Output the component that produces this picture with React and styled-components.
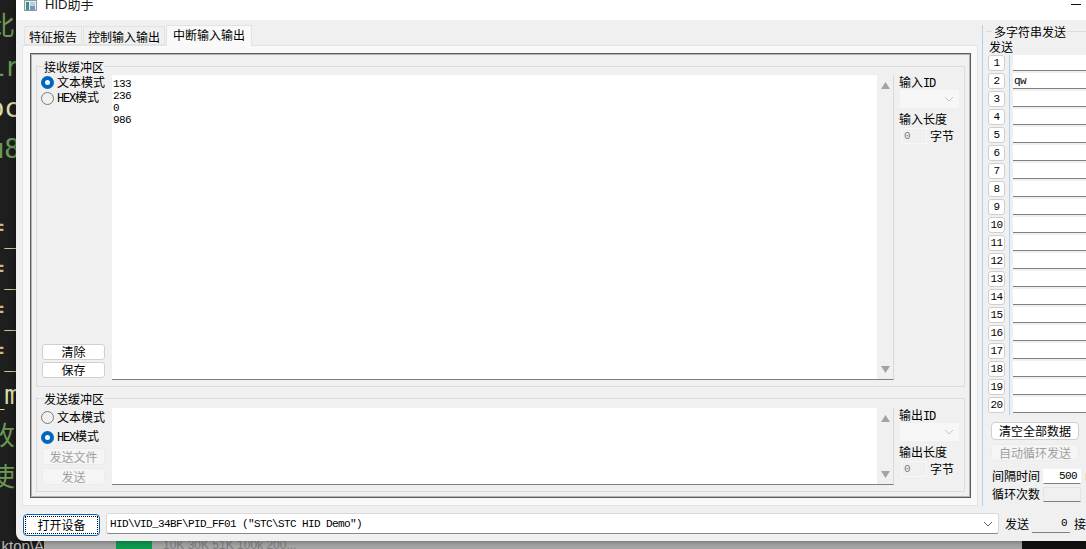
import React from "react";
import styled, { createGlobalStyle } from "styled-components";

const CJK = `"Noto Sans CJK SC", "Liberation Sans", sans-serif`;
const MONO = `"Liberation Mono", "Noto Sans CJK SC", monospace`;

const CODE_LINES = [
  { text: "比", color: "#6a9955", inset: 5 },
  { text: "Lr", color: "#6a9955", inset: 0 },
  { text: "oc", color: "#dcdcaa", inset: 0 },
  { text: "u8", color: "#6a9955", inset: 0 },
  { text: " ", color: "#d4d4d4", inset: 0 },
  { rule: true },
  { rule: true },
  { rule: true },
  { rule: true },
  { text: "_m", color: "#dcdcaa", inset: 0 },
  { text: "收", color: "#6a9955", inset: 5 },
  { text: "使", color: "#6a9955", inset: 5 },
];

const SLOTS = Array.from({ length: 20 }, (_, i) => i + 1);

const Triangle = ({ down }) => (
  <svg width="9" height="7" viewBox="0 0 9 7" style={{ display: "block" }}>
    <path d={down ? "M0 0H9L4.5 7Z" : "M0 7H9L4.5 0Z"} fill="#a3a3a3" />
  </svg>
);

const Chevron = ({ color = "#606060" }) => (
  <svg width="10" height="6" viewBox="0 0 10 6" style={{ display: "block" }}>
    <path d="M1 1L5 5L9 1" fill="none" stroke={color} strokeWidth="1" />
  </svg>
);

const AppIcon = () => (
  <svg width="13" height="20" viewBox="0 0 13 20" style={{ display: "block" }}>
    <rect x="0.5" y="0.5" width="12" height="10" fill="#e8eef0" stroke="#8a9aa0" />
    <rect x="2" y="2" width="3" height="8" fill="#3f8f8a" />
    <rect x="6" y="2" width="5" height="4" fill="#b8cfe0" />
    <rect x="6" y="6" width="5" height="4" fill="#7d93c4" />
  </svg>
);

const Buffer = ({ legend, layout, modeText, modeHex, lines, bottom, idLabel, lenLabel }) => (
  <Group $height={layout.height}>
    <Legend>{legend}</Legend>
    <BufferRow $height={layout.row}>
      <ModeColumn $top={layout.radioTop} $bottom={layout.stackBottom}>
        <RadioRow $on={modeText}>
          <Radio $on={modeText} />
          <span>文本模式</span>
        </RadioRow>
        <RadioRow $gap={layout.radioGap} $on={modeHex}>
          <Radio $on={modeHex} />
          <span>
            <Latin>HEX</Latin>模式
          </span>
        </RadioRow>
        <ButtonStack $gap={layout.stackGap}>{bottom}</ButtonStack>
      </ModeColumn>
      <TextPane $top={layout.paneTop}>
        <TextBody>{lines}</TextBody>
        <ScrollTrack>
          <Triangle />
          <Triangle down />
        </ScrollTrack>
      </TextPane>
      <SettingsColumn $top={layout.settingsTop}>
        <SettingLabel>
          {idLabel}
          <Latin>ID</Latin>
        </SettingLabel>
        <DisabledCombo>
          <Chevron color="#c4c4c4" />
        </DisabledCombo>
        <SettingLabel>{lenLabel}</SettingLabel>
        <LengthRow>
          <LengthInput>0</LengthInput>
          <span>字节</span>
        </LengthRow>
      </SettingsColumn>
    </BufferRow>
  </Group>
);

const RECEIVE_LAYOUT = {
  height: 329,
  row: 312,
  radioTop: 0,
  radioGap: 0,
  paneTop: 1,
  settingsTop: 0,
  stackBottom: 8,
  stackGap: 2,
};

const SEND_LAYOUT = {
  height: 102,
  row: 85,
  radioTop: 3,
  radioGap: 4,
  paneTop: 2,
  settingsTop: 1,
  stackBottom: 6,
  stackGap: 3,
};

export default function App() {
  return (
    <Desktop>
      <GlobalStyle />
      <CodeStrip>
        {CODE_LINES.map((line, i) =>
          line.rule ? (
            <CodeLine key={i}>
              <CodeEquals>=</CodeEquals>
              <CodeUnder>_</CodeUnder>
            </CodeLine>
          ) : (
            <CodeLine key={i} $color={line.color} $inset={line.inset}>
              {line.text}
            </CodeLine>
          )
        )}
      </CodeStrip>
      <Taskbar>
        <TaskPath>ktop\A</TaskPath>
        <TaskMeter />
        <TaskLabel>10K 30K 51K 100k 200...</TaskLabel>
        <TaskDark />
      </Taskbar>
      <Window>
        <TitleBar>
          <AppIcon />
          <TitleText>HID助手</TitleText>
          <Minimize />
        </TitleBar>
        <MainRow>
          <TabsArea>
            <TabBar>
              <Tab>特征报告</Tab>
              <Tab>控制输入输出</Tab>
              <Tab $active>中断输入输出</Tab>
            </TabBar>
            <TabPanel>
              <Frame>
                <Buffer
                  legend="接收缓冲区"
                  layout={RECEIVE_LAYOUT}
                  modeText
                  lines={"133\n236\n0\n986"}
                  idLabel="输入"
                  lenLabel="输入长度"
                  bottom={
                    <>
                      <PushButton>清除</PushButton>
                      <PushButton>保存</PushButton>
                    </>
                  }
                />
                <Buffer
                  legend="发送缓冲区"
                  layout={SEND_LAYOUT}
                  modeHex
                  lines=""
                  idLabel="输出"
                  lenLabel="输出长度"
                  bottom={
                    <>
                      <PushButton disabled>发送文件</PushButton>
                      <PushButton disabled>发送</PushButton>
                    </>
                  }
                />
              </Frame>
            </TabPanel>
          </TabsArea>
          <SidePanel>
            <SideGroup>
              <SideLegend>多字符串发送</SideLegend>
              <SendCaption>发送</SendCaption>
              <SlotList>
                {SLOTS.map((n) => (
                  <SlotRow key={n}>
                    <SlotButton>{n}</SlotButton>
                    <SlotCell>
                      <SlotInput>{n === 2 ? "qw" : ""}</SlotInput>
                    </SlotCell>
                  </SlotRow>
                ))}
              </SlotList>
              <SideButton>清空全部数据</SideButton>
              <SideButton disabled>自动循环发送</SideButton>
              <FieldRow>
                <span>间隔时间</span>
                <NumberBox>500</NumberBox>
                <Unit>ms</Unit>
              </FieldRow>
              <FieldRow>
                <span>循环次数</span>
                <NumberBox $off />
              </FieldRow>
            </SideGroup>
          </SidePanel>
        </MainRow>
        <BottomBar>
          <OpenButton>
            <span>打开设备</span>
          </OpenButton>
          <DeviceCombo>
            <span>HID\VID_34BF\PID_FF01 ("STC\STC HID Demo")</span>
            <Chevron />
          </DeviceCombo>
          <BarLabel $gap={6}>发送</BarLabel>
          <CountBox>0</CountBox>
          <BarLabel $gap={4}>接收</BarLabel>
        </BottomBar>
      </Window>
    </Desktop>
  );
}

const GlobalStyle = createGlobalStyle`
  html, body {
    margin: 0;
    padding: 0;
    background: #1e1e1e;
  }

  * {
    box-sizing: border-box;
  }
`;

const Desktop = styled.div`
  position: relative;
  width: 1086px;
  height: 549px;
  overflow: hidden;
  background: #1e1e1e;
  display: flex;
  flex-direction: column;
  font: 12px/16px ${CJK};
  color: #000;
`;

const CodeStrip = styled.div`
  width: 20px;
  height: 541px;
  padding-top: 6px;
  overflow: hidden;
`;

const CodeLine = styled.div`
  display: flex;
  justify-content: flex-end;
  height: 41px;
  padding-right: ${(p) => p.$inset || 0}px;
  font: 26px/41px "DejaVu Sans Mono", ${MONO};
  color: ${(p) => p.$color || "#c8c88a"};
  white-space: pre;
`;

const CodeEquals = styled.span`
  color: #c9b98a;
  transform: translateY(-4px);
`;

const CodeUnder = styled.span`
  color: #c8c88a;
  transform: translateY(3px);
`;

const Taskbar = styled.div`
  height: 8px;
  display: flex;
  background: #a6a6a6;
  overflow: hidden;
`;

const TaskPath = styled.div`
  flex: none;
  width: 44px;
  background: #1e1e1e;
  color: #b8b8b8;
  font: 15px/9px "Liberation Sans", sans-serif;
  text-align: right;
  white-space: nowrap;
`;

const TaskMeter = styled.div`
  flex: none;
  width: 36px;
  margin-left: 72px;
  background: #0f9a50;
`;

const TaskLabel = styled.div`
  margin-left: 11px;
  color: #7c7c7c;
  font: 12px/9px "Liberation Sans", sans-serif;
  white-space: nowrap;
`;

const TaskDark = styled.div`
  margin-left: auto;
  width: 64px;
  background: #111;
`;

/* the window floats over the editor and taskbar behind it */
const Window = styled.div`
  position: absolute;
  left: 16px;
  top: 0;
  width: 1070px;
  height: 541px;
  display: flex;
  flex-direction: column;
  overflow: hidden;
  background: #f0f0f0;
  border-bottom-left-radius: 8px;
  box-shadow: 0 0 6px rgba(0, 0, 0, 0.45);
`;

const TitleBar = styled.div`
  flex: none;
  height: 20px;
  background: #fff;
  display: flex;
  align-items: flex-start;
  padding-left: 8px;
  overflow: hidden;
`;

const TitleText = styled.div`
  margin: -3px 0 0 8px;
  font: 13px/16px "Liberation Sans", ${CJK};
  color: #1a1a1a;
`;

const Minimize = styled.div`
  width: 10px;
  height: 1px;
  margin: 4px 5px 0 auto;
  background: #111;
`;

const MainRow = styled.div`
  flex: none;
  height: 486px;
  display: flex;
`;

const TabsArea = styled.div`
  width: 956px;
  margin: 5px 0 0 6px;
  display: flex;
  flex-direction: column;
`;

const TabBar = styled.div`
  flex: none;
  height: 20px;
  display: flex;
  align-items: flex-end;
  padding-left: 2px;
`;

const Tab = styled.div`
  height: ${(p) => (p.$active ? 21 : 19)}px;
  margin-bottom: ${(p) => (p.$active ? -1 : 0)}px;
  padding: ${(p) => (p.$active ? "1px 6px 0" : "2px 4px 0")};
  background: ${(p) => (p.$active ? "#f9f9f9" : "#f0f0f0")};
  border: 1px solid #e3e3e3;
  border-bottom: ${(p) => (p.$active ? "none" : "1px solid #e3e3e3")};
  position: relative;
  z-index: ${(p) => (p.$active ? 1 : 0)};
  margin-right: 1px;
`;

const TabPanel = styled.div`
  flex: 1;
  padding: 7px 6px 7px 7px;
  background: #f9f9f9;
  border: 1px solid #e3e3e3;
`;

const Frame = styled.div`
  height: 100%;
  padding: 4px 5px;
  background: #f0f0f0;
  border: 1px solid #5c5c5c;
  box-shadow: inset 0 0 0 1px #b4b4b4;
  display: flex;
  flex-direction: column;
  gap: 3px;
`;

const Group = styled.fieldset`
  flex: none;
  height: ${(p) => p.$height}px;
  margin: 0;
  padding: 0;
  border: 1px solid #dcdcdc;
  min-width: 0;
`;

const Legend = styled.legend`
  margin-left: 7px;
  padding: 0;
  height: 16px;
  line-height: 17px;
`;

const BufferRow = styled.div`
  height: ${(p) => p.$height}px;
  display: flex;
`;

const ModeColumn = styled.div`
  flex: none;
  width: 75px;
  padding: ${(p) => p.$top}px 7px ${(p) => p.$bottom}px 4px;
  display: flex;
  flex-direction: column;
`;

const RadioRow = styled.div`
  flex: none;
  display: flex;
  align-items: center;
  height: 16px;
  margin-top: ${(p) => p.$gap || 0}px;
  white-space: nowrap;
  gap: 3px;
`;

const Radio = styled.div`
  flex: none;
  width: 13px;
  height: 13px;
  border-radius: 50%;
  background: ${(p) => (p.$on ? "#fff" : "#f0f0f0")};
  border: ${(p) => (p.$on ? "4px solid #0067c0" : "1px solid #7a7a7a")};
`;

const Latin = styled.span`
  font: 12px/16px ${MONO};
  letter-spacing: -1.2px;
`;

const ButtonStack = styled.div`
  margin-top: auto;
  display: flex;
  flex-direction: column;
  gap: ${(p) => p.$gap}px;
  padding-left: 1px;
`;

const PushButton = styled.button`
  width: 63px;
  height: ${(p) => (p.disabled ? 17 : 16)}px;
  padding: 0;
  font: 12px/14px ${CJK};
  color: ${(p) => (p.disabled ? "#9f9f9f" : "#000")};
  background: ${(p) => (p.disabled ? "#f5f5f5" : "#fff")};
  border: 1px solid ${(p) => (p.disabled ? "#ececec" : "#d0d0d0")};
  border-radius: 3px;
`;

const TextPane = styled.div`
  flex: none;
  width: 782px;
  margin: ${(p) => p.$top}px 0 6px;
  display: flex;
  background: #fff;
  border-bottom: 1px solid #7f7f7f;
  border-right: 1px solid #d8d8d8;
`;

const TextBody = styled.pre`
  flex: 1;
  margin: 0;
  padding: 3px 0 0 1px;
  font: 11px/12px ${MONO};
  letter-spacing: -0.6px;
  color: #000;
`;

const ScrollTrack = styled.div`
  flex: none;
  width: 16px;
  background: #f0f0f0;
  display: flex;
  flex-direction: column;
  justify-content: space-between;
  align-items: center;
  padding: 7px 0 6px;
`;

const SettingsColumn = styled.div`
  flex: 1;
  padding: ${(p) => p.$top}px 0 0 5px;
  display: flex;
  flex-direction: column;
  align-items: flex-start;
`;

const SettingLabel = styled.div`
  height: 16px;
  white-space: nowrap;
`;

const DisabledCombo = styled.div`
  width: 59px;
  height: 18px;
  margin: 0 0 3px 1px;
  padding-right: 5px;
  background: #f7f7f7;
  display: flex;
  justify-content: flex-end;
  align-items: center;
`;

const LengthRow = styled.div`
  display: flex;
  align-items: center;
  gap: 3px;
  margin: 1px 0 0 2px;
`;

const LengthInput = styled.div`
  width: 26px;
  height: 16px;
  padding-left: 2px;
  background: #f0f0f0;
  border: 1px solid #f8f8f8;
  color: #808080;
  font: 11px/14px ${MONO};
`;

const SidePanel = styled.div`
  flex: none;
  width: 104px;
  margin: 5px 0 0 4px;
  padding-left: 3px;
  border-left: 1px solid #a9d5f0;
  overflow: hidden;
`;

const SideGroup = styled.div`
  margin-top: 6px;
  padding-top: 8px;
  border-top: 1px solid #dcdcdc;
  position: relative;
  display: flex;
  flex-direction: column;
  align-items: flex-start;
`;

/* sits on the group's top rule */
const SideLegend = styled.div`
  position: absolute;
  left: 6px;
  top: -8px;
  padding: 0 2px;
  background: #f0f0f0;
`;

const SendCaption = styled.div`
  margin: -1px 0 0 3px;
  height: 16px;
  line-height: 15px;
`;

const SlotList = styled.div`
  display: flex;
  flex-direction: column;
  width: 100%;
`;

const SlotRow = styled.div`
  display: flex;
  height: 18px;
`;

const SlotButton = styled.div`
  flex: none;
  width: 17px;
  height: 16px;
  margin: 0 4px 0 2px;
  background: #fff;
  border: 1px solid #cfcfcf;
  border-radius: 3px;
  font: 11px/14px ${MONO};
  letter-spacing: -0.6px;
  text-align: center;
`;

const SlotCell = styled.div`
  flex: 1;
  padding-left: 3px;
  border-left: 1px solid #a9d5f0;
`;

const SlotInput = styled.div`
  height: 16px;
  padding-left: 1px;
  background: #fff;
  border-bottom: 1px solid #808080;
  font: 11px/16px ${MONO};
  letter-spacing: -0.6px;
`;

const SideButton = styled.button`
  flex: none;
  width: 88px;
  height: ${(p) => (p.disabled ? 17 : 18)}px;
  margin: ${(p) => (p.disabled ? "4px 0 6px 5px" : "7px 0 0 5px")};
  padding: 0;
  font: 12px/14px ${CJK};
  color: ${(p) => (p.disabled ? "#9f9f9f" : "#000")};
  background: ${(p) => (p.disabled ? "#f5f5f5" : "#fff")};
  border: 1px solid ${(p) => (p.disabled ? "#ececec" : "#d0d0d0")};
  border-radius: 4px;
`;

const FieldRow = styled.div`
  flex: none;
  display: flex;
  align-items: center;
  height: 18px;
  margin-left: 6px;
  gap: 3px;
  white-space: nowrap;
`;

const NumberBox = styled.div`
  width: 38px;
  height: 15px;
  padding-right: 3px;
  text-align: right;
  background: ${(p) => (p.$off ? "#f0f0f0" : "#fff")};
  border: 1px solid ${(p) => (p.$off ? "#e4e4e4" : "#fff")};
  border-bottom: 1px solid #808080;
  font: 11px/13px ${MONO};
  letter-spacing: -0.6px;
`;

const Unit = styled.span`
  margin-left: 1px;
`;

const BottomBar = styled.div`
  flex: 1;
  display: flex;
  align-items: flex-start;
  padding: 8px 0 0 7px;
  white-space: nowrap;
`;

const OpenButton = styled.div`
  flex: none;
  width: 77px;
  height: 22px;
  padding: 1px;
  background: #fff;
  border: 1px solid #0067c0;
  border-radius: 4px;
  text-align: center;

  span {
    display: block;
    height: 18px;
    line-height: 16px;
    border: 1px dotted #000;
  }
`;

const DeviceCombo = styled.div`
  flex: none;
  width: 893px;
  height: 21px;
  margin: -1px 0 0 6px;
  padding: 1px 5px 0 3px;
  background: #fff;
  border: 1px solid #d9d9d9;
  border-bottom-color: #8a8a8a;
  border-radius: 3px;
  display: flex;
  align-items: center;
  justify-content: space-between;
  font: 11px/18px ${MONO};
  letter-spacing: -0.6px;
`;

const BarLabel = styled.div`
  flex: none;
  margin: 2px 0 0 ${(p) => p.$gap}px;
`;

const CountBox = styled.div`
  flex: none;
  width: 38px;
  height: 17px;
  margin: 2px 0 0 3px;
  padding-right: 3px;
  text-align: right;
  background: #f0f0f0;
  border-bottom: 1px solid #808080;
  font: 11px/15px ${MONO};
  letter-spacing: -0.6px;
`;
